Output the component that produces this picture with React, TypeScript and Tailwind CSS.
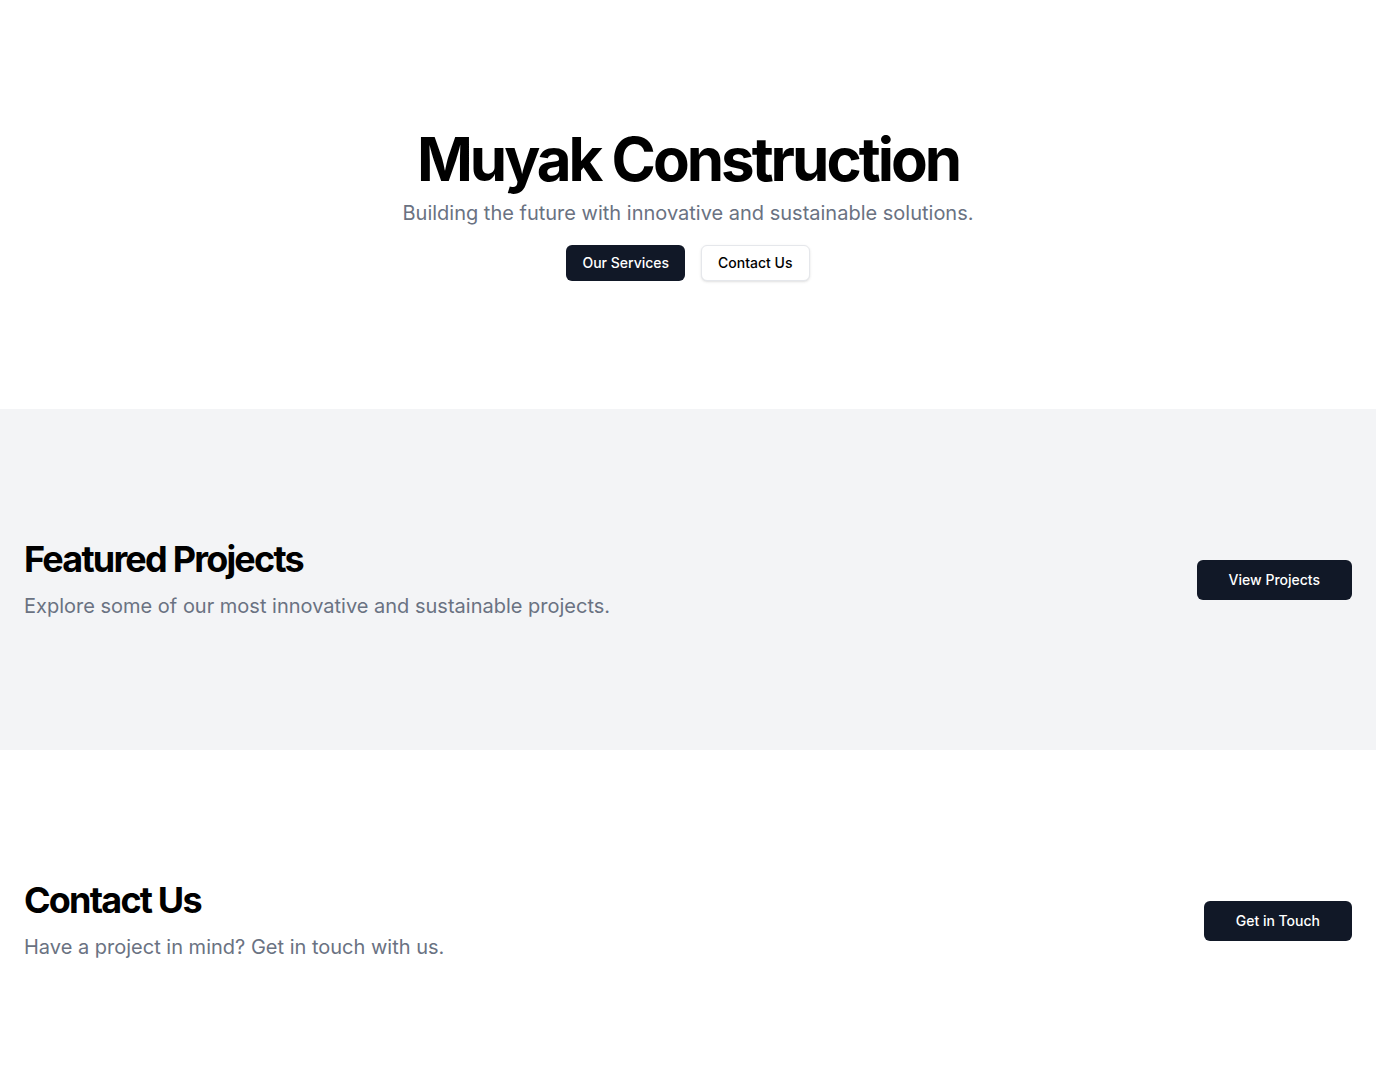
export default function App() {
  return (
    <div className="min-h-screen bg-white" style={{ fontFamily: "Inter, 'Noto Sans', sans-serif" }}>
      <section className="flex h-[409px] flex-col items-center justify-center px-6 text-center">
        <h1 className="text-6xl font-bold tracking-tighter text-black">Muyak Construction</h1>
        <p className="mt-[10px] text-xl text-gray-500">Building the future with innovative and sustainable solutions.</p>
        <div className="mt-[18px] flex gap-4">
          <button className="h-9 rounded-md bg-[#111827] px-4 text-sm font-medium text-white">Our Services</button>
          <button className="h-9 rounded-md border border-gray-200 bg-white px-4 text-sm font-medium text-black shadow-sm">Contact Us</button>
        </div>
      </section>
      <section className="flex h-[341px] items-center justify-between bg-gray-100 px-6">
        <div className="flex flex-col gap-[13px]">
          <h2 className="text-4xl font-bold tracking-tighter text-black">Featured Projects</h2>
          <p className="text-xl text-gray-500">Explore some of our most innovative and sustainable projects.</p>
        </div>
        <button className="h-10 rounded-md bg-[#111827] px-8 text-sm font-medium text-white">View Projects</button>
      </section>
      <section className="flex h-[341px] items-center justify-between bg-white px-6">
        <div className="flex flex-col gap-[13px]">
          <h2 className="text-4xl font-bold tracking-tighter text-black">Contact Us</h2>
          <p className="text-xl text-gray-500">Have a project in mind? Get in touch with us.</p>
        </div>
        <button className="h-10 rounded-md bg-[#111827] px-8 text-sm font-medium text-white">Get in Touch</button>
      </section>
    </div>
  );
}
